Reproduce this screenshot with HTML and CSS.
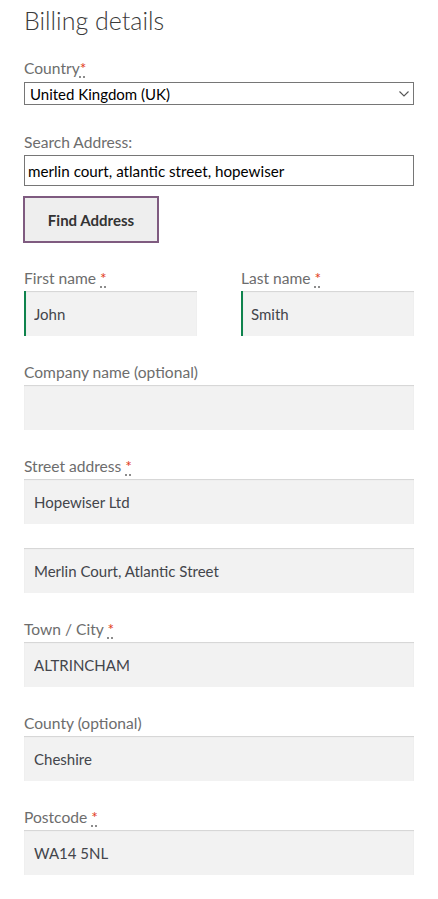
FILE: index.html
```html
<!DOCTYPE html>
<html lang="en">
<head>
<meta charset="utf-8">
<title>Billing details</title>
<link rel="stylesheet" href="styles.css">
</head>
<body>
<form class="billing">
  <h3 class="title">Billing details</h3>

  <div class="field field-country">
    <label class="label" for="country">Country<abbr class="req" title="required">*</abbr></label>
    <div class="select-wrap">
      <select id="country" class="select"><option>United Kingdom (UK)</option></select>
      <svg class="chev" width="10" height="6" viewBox="0 0 10 6"><path d="M0.5 0.5 L5 5 L9.5 0.5" fill="none" stroke="#555" stroke-width="1.1"/></svg>
    </div>
  </div>

  <div class="field field-search">
    <label class="label" for="search">Search Address:</label>
    <input id="search" class="search" type="text" value="merlin court, atlantic street, hopewiser">
    <button type="button" class="find">Find Address</button>
  </div>

  <div class="names">
    <div class="field">
      <label class="label" for="fn">First name <abbr class="req" title="required">*</abbr></label>
      <input id="fn" class="input valid" type="text" value="John">
    </div>
    <div class="field">
      <label class="label" for="ln">Last name <abbr class="req" title="required">*</abbr></label>
      <input id="ln" class="input valid" type="text" value="Smith">
    </div>
  </div>

  <div class="field">
    <label class="label" for="co">Company name (optional)</label>
    <input id="co" class="input" type="text" value="">
  </div>

  <div class="field">
    <label class="label" for="st">Street address <abbr class="req" title="required">*</abbr></label>
    <input id="st" class="input" type="text" value="Hopewiser Ltd">
  </div>
  <div class="field">
    <input class="input" type="text" value="Merlin Court, Atlantic Street">
  </div>

  <div class="field">
    <label class="label" for="town">Town / City <abbr class="req" title="required">*</abbr></label>
    <input id="town" class="input" type="text" value="ALTRINCHAM">
  </div>

  <div class="field">
    <label class="label" for="county">County (optional)</label>
    <input id="county" class="input" type="text" value="Cheshire">
  </div>

  <div class="field">
    <label class="label" for="pc">Postcode <abbr class="req" title="required">*</abbr></label>
    <input id="pc" class="input" type="text" value="WA14 5NL">
  </div>
</form>
</body>
</html>
```
FILE: styles.css
```css
* { box-sizing: border-box; }
html, body { margin: 0; padding: 0; background: #fff; }
body {
  font-family: "Lato", "Open Sans", sans-serif;
  color: #43454b;
}
.billing { padding: 0 24px 0 24px; }
.title {
  margin: 0;
  padding-top: 4px;
  height: 56px;
  font-size: 25px;
  font-weight: 300;
  line-height: 32px;
  color: #3a3a3a;
}
.field { margin-bottom: 24px; }
.label {
  display: block;
  font-size: 15.6px;
  line-height: 24px;
  height: 25px;
  color: #6d6d6d;
}
.req {
  color: #e2401c;
  text-decoration: underline dotted #6d6d6d;
  text-underline-offset: 3px;
  border: none;
}
.field-country .label { height: 26px; }
.field-country { margin-bottom: 25px; }
.select-wrap { position: relative; }
.select {
  -webkit-appearance: none;
  appearance: none;
  display: block;
  width: 100%;
  height: 23px;
  border: 1px solid #767676;
  border-radius: 0;
  background: #fff;
  padding: 0 0 0 5px;
  font-family: inherit;
  font-size: 15px;
  color: #000;
}
.chev { position: absolute; right: 5px; top: 9px; }
.field-search { margin-bottom: 23px; }
.search {
  display: block;
  width: 100%;
  height: 31px;
  border: 1px solid #767676;
  border-radius: 0;
  padding: 0 0 0 3px;
  font-family: inherit;
  font-size: 15.2px;
  color: #000;
  margin: 0 0 10px 0;
}
.find {
  display: block;
  margin-left: -1px;
  width: 136px;
  height: 47px;
  border: 2px solid #7f5b80;
  background: #eeeeee;
  font-family: inherit;
  font-size: 15px;
  font-weight: 700;
  color: #333;
  padding: 0;
}
.names {
  display: grid;
  grid-template-columns: 1fr 1fr;
  column-gap: 44px;
}
.input {
  display: block;
  width: 100%;
  height: 45px;
  border: 0;
  border-radius: 0;
  background: #f2f2f2;
  box-shadow: inset 0 1px 1px rgba(0, 0, 0, 0.125);
  padding: 0 0 0 10px;
  font-family: inherit;
  font-size: 15px;
  color: #43454b;
  outline: none;
}
.input.valid {
  border-left: 2px solid #0f834d;
  padding-left: 8px;
}
```
